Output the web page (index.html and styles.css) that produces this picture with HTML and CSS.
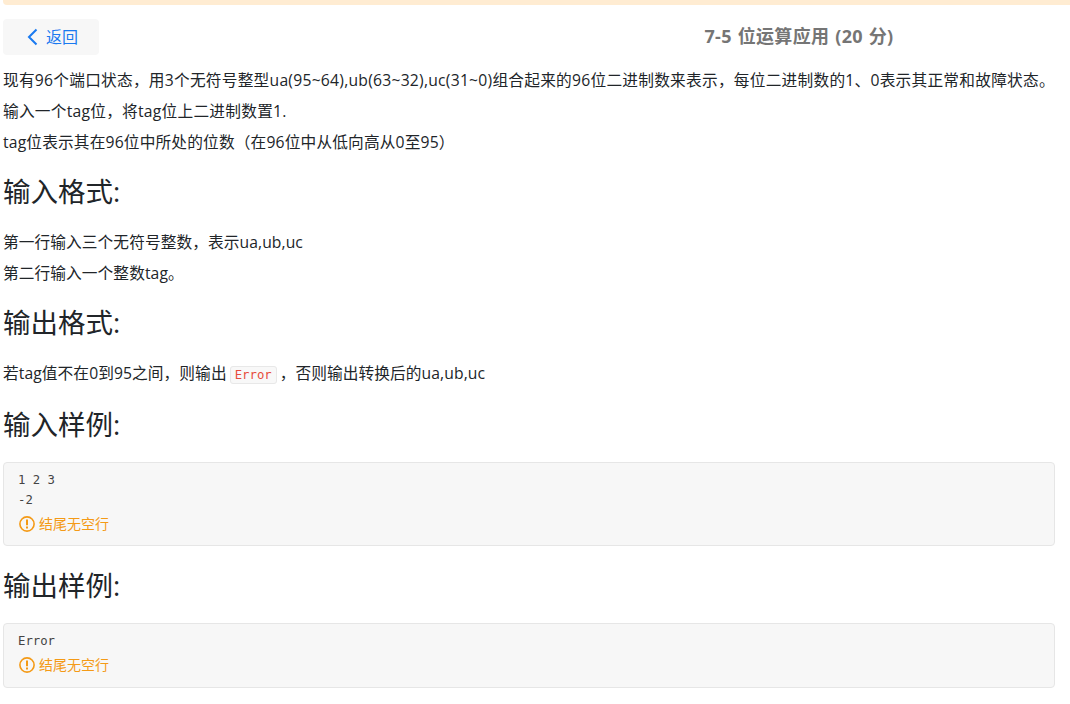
FILE: index.html
```
<!DOCTYPE html>
<html lang="zh-CN">
<head>
    <meta charset="UTF-8">
    <meta name="viewport" content="width=device-width, initial-scale=1.0">
    <title>7-5 位运算应用</title>
    <link rel="stylesheet" href="styles.css">
</head>
<body>
    <div class="banner"></div>
    <div class="container">
        <div class="header">
            <button class="back">
                <svg width="11" height="18" viewBox="0 0 11 18" fill="none" stroke="currentColor" stroke-width="2">
                    <path d="M9.500 1.500L2 9l7.500 7.500"/>
                </svg>
                <span>返回</span>
            </button>
            <div class="title">7-5 位运算应用 (20 分)</div>
        </div>

        <p class="intro">现有96个端口状态，用3个无符号整型ua(95~64),ub(63~32),uc(31~0)组合起来的96位二进制数来表示，每位二进制数的1、0表示其正常和故障状态。<br>
        输入一个tag位，将tag位上二进制数置1.<br>
        <span class="range">tag位表示其在96位中所处的位数（在96位中从低向高从0至95）</span></p>

        <h3>输入格式:</h3>
        <p>第一行输入三个无符号整数，表示ua,ub,uc<br>
        第二行输入一个整数tag。</p>

        <h3>输出格式:</h3>
        <p>若tag值不在0到95之间，则输出<code>Error</code>，否则输出转换后的ua,ub,uc</p>

        <h3>输入样例:</h3>
        <div class="sample">
            <pre>1 2 3
-2</pre>
            <div class="hint">
                <svg width="16" height="16" viewBox="0 0 16 16">
                    <circle cx="8" cy="8" r="7.100" fill="none" stroke="currentColor" stroke-width="1.600"/>
                    <path d="M7 3.500h2v5.800H7zM7 10.500h2v2H7z" fill="currentColor"/>
                </svg>
                <span>结尾无空行</span>
            </div>
        </div>

        <h3>输出样例:</h3>
        <div class="sample">
            <pre>Error</pre>
            <div class="hint">
                <svg width="16" height="16" viewBox="0 0 16 16">
                    <circle cx="8" cy="8" r="7.100" fill="none" stroke="currentColor" stroke-width="1.600"/>
                    <path d="M7 3.500h2v5.800H7zM7 10.500h2v2H7z" fill="currentColor"/>
                </svg>
                <span>结尾无空行</span>
            </div>
        </div>
    </div>
</body>
</html>
```
FILE: styles.css
```
* {
    box-sizing: border-box;
}
body {
    margin: 0;
    background-color: #fff;
    color: #212529;
    font-family: "Open Sans", "Noto Sans CJK SC", sans-serif;
    font-size: 15.7px;
    line-height: 31px;
    overflow: hidden;
}
.banner {
    height: 5px;
    margin-left: 3px;
    background-color: #ffecd2;
    border-bottom-left-radius: 4px;
}
.container {
    padding: 14px 15px 0 3px;
}
.header {
    display: flex;
    align-items: center;
    height: 36px;
    margin-bottom: 10px;
}
.back {
    display: flex;
    align-items: center;
    gap: 8px;
    width: 96px;
    height: 36px;
    padding: 0 0 1px 24px;
    border: none;
    border-radius: 4px;
    background-color: #f7f7f7;
    color: #1a7af0;
    font-family: inherit;
    font-size: 16px;
}
.back span {
    padding-bottom: 1px;
}
.title {
    margin-left: 605.5px;
    padding-bottom: 2px;
    color: #757575;
    font-size: 18px;
    font-weight: bold;
    letter-spacing: 0.3px;
    word-spacing: 1px;
    white-space: nowrap;
}
p {
    margin: 0;
    letter-spacing: 0.08px;
    white-space: nowrap;
}
.intro {
    letter-spacing: 0.24px;
}
.range {
    letter-spacing: 0.16px;
}
h3 {
    margin: 16px 0 18px;
    font-size: 27.5px;
    font-weight: normal;
    line-height: 35px;
}
code {
    margin: 0 3px;
    padding: 1px 4px;
    border: 1px solid #e8e8e8;
    border-radius: 3px;
    background-color: #f8f8f8;
    color: #e74c3c;
    font-family: "DejaVu Sans Mono", monospace;
    font-size: 12.3px;
    letter-spacing: 0;
}
.sample {
    margin: 20px 0 22px;
    padding: 8px 14px;
    border: 1px solid #e6e6e6;
    border-radius: 4px;
    background-color: #f7f7f7;
}
pre {
    margin: 0;
    color: #444;
    font-family: "DejaVu Sans Mono", monospace;
    font-size: 12.3px;
    line-height: 19.5px;
}
.hint {
    display: flex;
    align-items: center;
    gap: 4px;
    height: 27px;
    padding-left: 1px;
    color: #f49a16;
    font-size: 14px;
}
.hint span {
    padding-bottom: 1px;
}
```
